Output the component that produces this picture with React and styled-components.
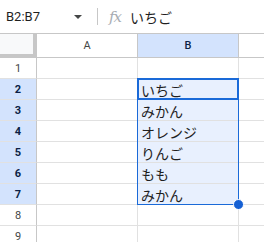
import React from 'react';
import styled, { createGlobalStyle } from 'styled-components';

const GlobalStyle = createGlobalStyle`
  html, body {
    margin: 0;
    padding: 0;
    background: #ffffff;
  }
  body {
    font-family: Roboto, "Noto Sans CJK JP", sans-serif;
    overflow: hidden;
  }
`;

const Page = styled.div`
  width: 264px;
  height: 242px;
  overflow: hidden;
  background: #fff;
`;

const FormulaBar = styled.div`
  height: 34px;
  box-sizing: border-box;
  border-bottom: 1px solid #c7c7c7;
  display: flex;
  align-items: center;
`;

const NameBox = styled.div`
  width: 90px;
  padding-left: 6px;
  box-sizing: border-box;
  display: flex;
  align-items: center;
  justify-content: space-between;
  padding-right: 8px;
  font-family: Roboto, Arial, sans-serif;
  font-size: 13px;
  color: #1f1f1f;
`;

const Caret = styled.span`
  width: 0;
  height: 0;
  border-left: 4px solid transparent;
  border-right: 4px solid transparent;
  border-top: 4px solid #444746;
  margin-top: 1px;
`;

const Divider = styled.div`
  width: 1px;
  height: 17px;
  background: #c7c7c7;
  margin-left: 7px;
`;

const Fx = styled.span`
  margin-left: 11px;
  font-family: "DejaVu Serif", "Liberation Serif", serif;
  font-style: italic;
  font-size: 15px;
  color: #a8adb3;
  letter-spacing: -1px;
`;

const FormulaText = styled.span`
  margin-left: 9px;
  font-family: "Noto Sans CJK JP", sans-serif;
  font-size: 14px;
  color: #1f1f1f;
`;

const Sheet = styled.div`
  position: relative;
  display: grid;
  grid-template-columns: 37px 101px 101px 1fr;
  grid-template-rows: 24px repeat(9, 21px);
`;

const Corner = styled.div`
  box-sizing: border-box;
  background: #f8f9fa;
  border-right: 4px solid #c7c7c7;
  border-bottom: 4px solid #c7c7c7;
`;

const ColHeader = styled.div`
  box-sizing: border-box;
  background: ${p => (p.$active ? '#d3e3fd' : '#ffffff')};
  border-right: ${p => (p.$last ? 'none' : '1px solid #c7c7c7')};
  border-bottom: 1px solid #c7c7c7;
  display: flex;
  align-items: center;
  justify-content: center;
  font-family: Roboto, Arial, sans-serif;
  font-size: 11px;
  color: ${p => (p.$active ? '#0b1f45' : '#444746')};
  font-weight: ${p => (p.$active ? 500 : 400)};
`;

const RowHeader = styled.div`
  box-sizing: border-box;
  background: ${p => (p.$active ? '#d3e3fd' : '#ffffff')};
  border-right: 1px solid #c7c7c7;
  border-bottom: 1px solid #e1e1e1;
  display: flex;
  align-items: center;
  justify-content: center;
  font-family: Roboto, Arial, sans-serif;
  font-size: 11px;
  color: ${p => (p.$active ? '#0b1f45' : '#444746')};
  font-weight: ${p => (p.$active ? 700 : 400)};
`;

const Cell = styled.div`
  box-sizing: border-box;
  background: ${p => (p.$selected ? '#e8f0fe' : '#ffffff')};
  border-right: ${p => (p.$last ? 'none' : '1px solid #e1e1e1')};
  border-bottom: 1px solid #e1e1e1;
  display: flex;
  align-items: center;
  padding: 1px 0 0 3px;
  font-family: "Noto Sans CJK JP", sans-serif;
  font-size: 14px;
  color: #1f1f1f;
  white-space: nowrap;
  overflow: hidden;
`;

const SelectionBox = styled.div`
  position: absolute;
  left: 137px;
  top: 44px;
  width: 102px;
  height: 127px;
  box-sizing: border-box;
  border: 1px solid #1a6ad8;
  pointer-events: none;
`;

const ActiveCell = styled.div`
  position: absolute;
  left: 137px;
  top: 44px;
  width: 102px;
  height: 22px;
  box-sizing: border-box;
  border: 2px solid #1a6ad8;
  pointer-events: none;
`;

const FillHandle = styled.div`
  position: absolute;
  left: 233px;
  top: 165px;
  width: 11px;
  height: 11px;
  border-radius: 50%;
  background: #1560d4;
  border: 1px solid #ffffff;
  box-sizing: border-box;
`;

const values = ['', 'いちご', 'みかん', 'オレンジ', 'りんご', 'もも', 'みかん', '', ''];

export default function App() {
  return (
    <Page>
      <GlobalStyle />
      <FormulaBar>
        <NameBox>
          <span>B2:B7</span>
          <Caret />
        </NameBox>
        <Divider />
        <Fx>fx</Fx>
        <FormulaText>いちご</FormulaText>
      </FormulaBar>
      <Sheet>
        <Corner />
        <ColHeader>A</ColHeader>
        <ColHeader $active>B</ColHeader>
        <ColHeader $last />
        {values.map((v, i) => {
          const row = i + 1;
          const sel = row >= 2 && row <= 7;
          return (
            <React.Fragment key={row}>
              <RowHeader $active={sel}>{row}</RowHeader>
              <Cell />
              <Cell $selected={sel}>{v}</Cell>
              <Cell $last />
            </React.Fragment>
          );
        })}
        <SelectionBox />
        <ActiveCell />
        <FillHandle />
      </Sheet>
    </Page>
  );
}
